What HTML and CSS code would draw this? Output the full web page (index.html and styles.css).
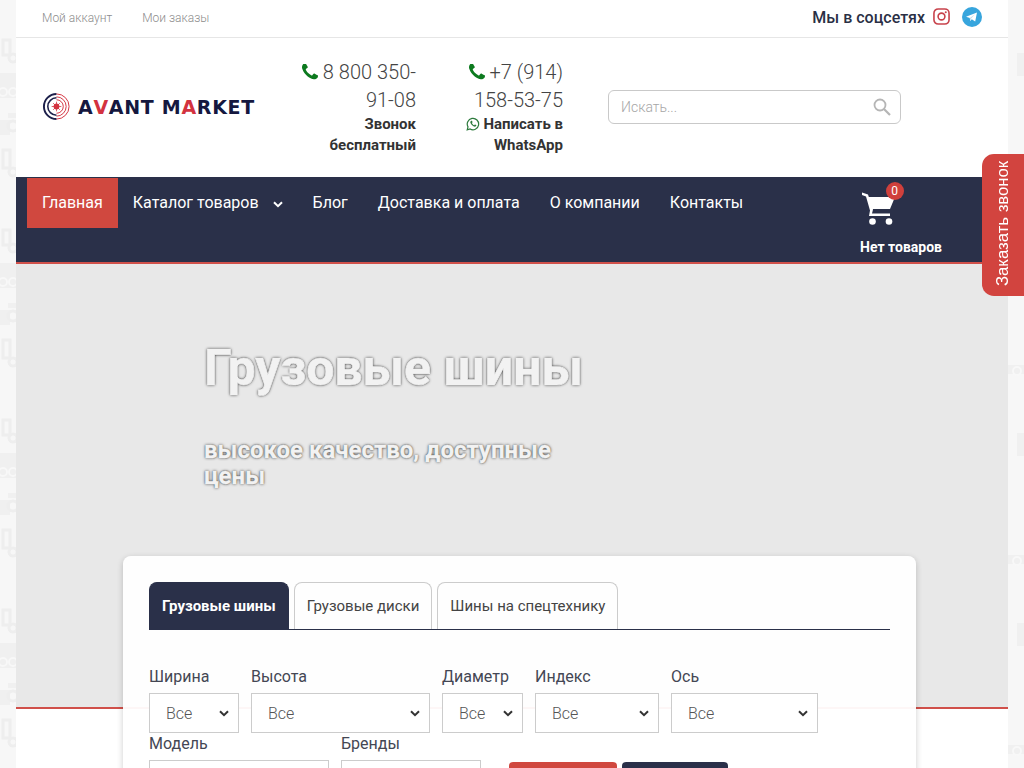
FILE: index.html
```html
<!DOCTYPE html>
<html lang="ru">
<head>
    <meta charset="UTF-8">
    <meta name="viewport" content="width=device-width, initial-scale=1.0">
    <title>Avant Market</title>
    <link rel="stylesheet" href="styles.css">
</head>
<body>
    <div class="wrapper">
        <div class="topbar">
            <div class="topbar-links">
                <a href="#">Мой аккаунт</a>
                <a href="#">Мои заказы</a>
            </div>
            <div class="social">
                <span class="social-title">Мы в соцсетях</span>
                <svg class="icon-insta" viewBox="0 0 18 18" width="17" height="17">
                    <rect x="1" y="1" width="16" height="16" rx="4.5" fill="none" stroke="#c8434c" stroke-width="1.7"/>
                    <circle cx="9" cy="9" r="3.6" fill="none" stroke="#c8434c" stroke-width="1.7"/>
                    <circle cx="13.5" cy="4.5" r="1.1" fill="#c8434c"/>
                </svg>
                <svg class="icon-telegram" viewBox="0 0 20 20" width="20" height="20">
                    <circle cx="10" cy="10" r="10" fill="#37a5dd"/>
                    <path d="M4 9.8 15 5.5 13.2 14.6 9.8 12.3 8.2 13.9 7.8 11z" fill="#fff"/>
                    <path d="M7.8 11 13 7.3 9.2 11.6 8.2 13.9z" fill="#c5dfee"/>
                </svg>
            </div>
        </div>

        <header class="header">
            <a class="logo" href="#">
                <svg viewBox="0 0 30 30" width="29" height="29">
                    <path d="M15 2a13 13 0 0 0 0 26" fill="none" stroke="#1c1f4a" stroke-width="2"/>
                    <path d="M15 6a9 9 0 0 0 0 18" fill="none" stroke="#1c1f4a" stroke-width="1.6"/>
                    <path d="M15 2a13 13 0 0 1 0 26M15 5a10 10 0 0 1 0 20M15 8a7 7 0 0 1 0 14" fill="none" stroke="#d3323f" stroke-width="1"/>
                    <circle cx="15" cy="15" r="3" fill="#d3323f"/>
                    <path d="M15 10v10M10 15h10M11.5 11.5l7 7M18.5 11.5l-7 7" stroke="#d3323f" stroke-width=".8"/>
                </svg>
                <span class="logo-text">A<b>V</b>ANT M<b>A</b>RKET</span>
            </a>
            <div class="phone phone-free">
                <div class="phone-number">
                    <svg class="icon-phone" viewBox="192 192 1408 1408" width="16" height="16"><path d="M1600 1240q0 27-10 70.5t-21 68.5q-21 50-122 106-94 51-186 51-27 0-53-3.5t-57.5-12.5-47-14.5-55.5-20.5-49-18q-98-35-175-83-127-79-264-216t-216-264q-48-77-83-175-3-9-18-49t-20.5-55.5-14.5-47-12.5-57.5-3.5-53q0-92 51-186 56-101 106-122 25-11 68.5-21t70.5-10q14 0 21 3 18 6 53 76 11 19 30 54t35 63.5 31 53.5q3 4 17.5 25t21.5 35.5 7 28.5q0 20-28.5 50t-62 55-62 53-28.5 46q0 9 5 22.5t8.5 20.5 14 24 11.5 19q76 137 174 235t235 174q2 1 19 11.5t24 14 20.5 8.5 22.5 5q18 0 46-28.5t53-62 55-62 50-28.5q14 0 28.5 7t35.5 21.5 25 17.5q25 15 53.5 31t63.5 35 54 30q70 35 76 53 3 7 3 21z" fill="#0d7a1f"/></svg>
                    8 800 350-91-08
                </div>
                <div class="phone-note">Звонок бесплатный</div>
            </div>
            <div class="phone phone-wa">
                <div class="phone-number">
                    <svg class="icon-phone" viewBox="192 192 1408 1408" width="16" height="16"><path d="M1600 1240q0 27-10 70.5t-21 68.5q-21 50-122 106-94 51-186 51-27 0-53-3.5t-57.5-12.5-47-14.5-55.5-20.5-49-18q-98-35-175-83-127-79-264-216t-216-264q-48-77-83-175-3-9-18-49t-20.5-55.5-14.5-47-12.5-57.5-3.5-53q0-92 51-186 56-101 106-122 25-11 68.5-21t70.5-10q14 0 21 3 18 6 53 76 11 19 30 54t35 63.5 31 53.5q3 4 17.5 25t21.5 35.5 7 28.5q0 20-28.5 50t-62 55-62 53-28.5 46q0 9 5 22.5t8.5 20.5 14 24 11.5 19q76 137 174 235t235 174q2 1 19 11.5t24 14 20.5 8.5 22.5 5q18 0 46-28.5t53-62 55-62 50-28.5q14 0 28.5 7t35.5 21.5 25 17.5q25 15 53.5 31t63.5 35 54 30q70 35 76 53 3 7 3 21z" fill="#0d7a1f"/></svg>
                    +7 (914) 158-53-75
                </div>
                <div class="phone-note">
                    <svg class="icon-wa" viewBox="0 0 14 14" width="14" height="14">
                        <path d="M1.2 12.8 2 9.9A5.7 5.7 0 1 1 4.1 12z" fill="none" stroke="#2c7a3c" stroke-width="1.2"/>
                        <path d="M4.9 3.9c-.6.5-.8 1.3-.4 2.2.6 1.500 1.900 2.800 3.400 3.400.9.300 1.700.1 2.200-.5.300-.4.300-.8.200-.9l-1.400-.7-.7.800c-1-.4-1.900-1.300-2.300-2.300l.7-.7-.6-1.400c-.1-.2-.7-.3-1.100.1z" fill="#2c7a3c"/>
                    </svg>
                    Написать в WhatsApp
                </div>
            </div>
            <form class="search">
                <input type="text" placeholder="Искать...">
                <svg viewBox="0 0 18 18" width="18" height="18">
                    <circle cx="7" cy="7" r="5.5" fill="none" stroke="#b5b5b5" stroke-width="1.8"/>
                    <path d="M11 11l6 6" stroke="#b5b5b5" stroke-width="2.2"/>
                </svg>
            </form>
        </header>

        <nav class="nav">
            <ul class="menu">
                <li class="active"><a href="#">Главная</a></li>
                <li>
                    <a href="#">Каталог товаров
                        <svg class="menu-arrow" viewBox="0 0 10 7" width="10" height="7"><path d="M1 1.2 5 5.2 9 1.2" fill="none" stroke="#fff" stroke-width="2"/></svg>
                    </a>
                </li>
                <li><a href="#">Блог</a></li>
                <li><a href="#">Доставка и оплата</a></li>
                <li><a href="#">О компании</a></li>
                <li><a href="#">Контакты</a></li>
            </ul>
            <a class="cart" href="#">
                <span class="cart-pic">
                    <svg viewBox="0 0 33 35" width="33" height="35">
                        <path d="M0 1.5 6 3.5 11 18.5 10 22.5H28V25H7L8 19.5 4 5.500 0 4z" fill="#fff"/>
                        <path d="M6 6H33L28 18H10z" fill="#fff"/>
                        <circle cx="10.5" cy="30.5" r="3.3" fill="#fff"/>
                        <circle cx="27" cy="30.5" r="3.3" fill="#fff"/>
                    </svg>
                    <span class="cart-count">0</span>
                </span>
                <span class="cart-label">Нет товаров</span>
            </a>
        </nav>

        <section class="hero">
            <h1>Грузовые шины</h1>
            <p>высокое качество, доступные цены</p>
        </section>

        <section class="picker">
            <div class="tabs">
                <a class="tab tab-active" href="#">Грузовые шины</a>
                <a class="tab" href="#">Грузовые диски</a>
                <a class="tab" href="#">Шины на спецтехнику</a>
            </div>
            <form class="filters">
                <div class="filter-row">
                    <label class="field w-width">Ширина<select><option>Все</option></select></label>
                    <label class="field w-height">Высота<select><option>Все</option></select></label>
                    <label class="field w-diam">Диаметр<select><option>Все</option></select></label>
                    <label class="field w-index">Индекс<select><option>Все</option></select></label>
                    <label class="field w-axle">Ось<select><option>Все</option></select></label>
                </div>
                <div class="filter-row">
                    <label class="field w-model">Модель<select><option>Все</option></select></label>
                    <label class="field w-brand">Бренды<select><option>Все</option></select></label>
                    <div class="filter-buttons">
                        <button class="btn btn-red" type="submit"></button>
                        <button class="btn btn-navy" type="reset"></button>
                    </div>
                </div>
            </form>
        </section>
    </div>

    <a class="callback" href="#">Заказать звонок</a>
</body>
</html>
```

FILE: styles.css
```css
html, body {
    height: 100%;
    overflow: hidden;
}

body {
    margin: 0;
    background-color: #f7f7f7;
    /* faint trucks tiled along the page edges */
    background-image: url("data:image/svg+xml,%3Csvg xmlns='http://www.w3.org/2000/svg' width='512' height='190'%3E%3Cg fill='%23f0f0f0'%3E%3Crect y='73' width='16' height='25'/%3E%3Crect y='120' width='10' height='15'/%3E%3Crect x='8' y='113' width='8' height='5'/%3E%3Crect x='505' y='53' width='7' height='23'/%3E%3Crect x='496' y='175' width='16' height='9'/%3E%3C/g%3E%3Cg fill='none' stroke='%23eeeeee' stroke-width='3'%3E%3Cpath d='M3 40h7v15H3zM3 150h7v18H3z'/%3E%3Ccircle cx='13' cy='58' r='4'/%3E%3Ccircle cx='13' cy='172' r='4'/%3E%3Ccircle cx='13' cy='126' r='5'/%3E%3C/g%3E%3Cg fill='none' stroke='%23f8f8f8' stroke-width='2'%3E%3Ccircle cx='3' cy='92' r='4'/%3E%3Ccircle cx='13' cy='92' r='4'/%3E%3Ccircle cx='505' cy='181' r='4'/%3E%3C/g%3E%3C/svg%3E");
    font-family: Roboto, "Liberation Sans", sans-serif;
    color: #2a2f45;
}

a {
    color: inherit;
    text-decoration: none;
}

.wrapper {
    width: 992px;
    margin: 0 auto;
    background: #fff;
    min-height: 100%;
}

/* top line */
.topbar {
    display: flex;
    justify-content: space-between;
    align-items: center;
    height: 35px;
    padding: 0 26px 2px;
    border-bottom: 1px solid #e6e6e6;
}

.topbar-links {
    display: flex;
    gap: 30px;
    font-size: 12px;
    font-weight: 300;
    color: #8c8c8c;
}

.social {
    display: flex;
    align-items: center;
    font-size: 16px;
    font-weight: 500;
}

.social svg {
    margin-bottom: 2px;
}

.icon-insta {
    margin-left: 8px;
}

.icon-telegram {
    margin-left: 12px;
}

/* header with logo and phones */
.header {
    display: flex;
    align-items: center;
    height: 137px;
    padding: 0 0 2px 26px;
}

.logo {
    display: flex;
    align-items: center;
    width: 213px;
}

.logo-text {
    margin-left: 7px;
    font-family: "DejaVu Sans", sans-serif;
    font-size: 19px;
    font-weight: 700;
    letter-spacing: .7px;
    color: #15183f;
    white-space: nowrap;
}

.logo-text b {
    color: #d3323f;
}

.phone {
    text-align: right;
}

.phone-free {
    width: 130px;
    margin-left: 31px;
}

.phone-wa {
    width: 110px;
    margin-left: 37px;
}

.phone-number {
    font-size: 20px;
    font-weight: 300;
    line-height: 28px;
    color: #444;
}

.icon-phone {
    vertical-align: -1px;
}

.phone-note {
    font-size: 15px;
    font-weight: 700;
    line-height: 21px;
    color: #333;
}

.icon-wa {
    vertical-align: -2px;
}

.search {
    display: flex;
    align-items: center;
    width: 293px;
    height: 34px;
    margin-left: 45px;
    box-sizing: border-box;
    border: 1px solid #c9c9c9;
    border-radius: 6px;
    padding: 0 9px 0 12px;
}

.search input {
    flex: 1;
    min-width: 0;
    border: none;
    outline: none;
    padding: 0;
    font-family: inherit;
    font-size: 14px;
    font-weight: 300;
}

.search input::placeholder {
    color: #a6a6a6;
}

/* main menu */
.nav {
    display: flex;
    justify-content: space-between;
    height: 84px;
    padding: 1px 66px 0 11px;
    background: #2a3049;
    border-bottom: 2px solid #d0504a;
}

.menu {
    display: flex;
    align-items: flex-start;
    margin: 0;
    padding: 0;
    list-style: none;
    color: #fff;
    font-size: 16px;
}

.menu a {
    display: block;
    padding: 0 15px;
    line-height: 50px;
}

.menu .active a {
    background: #d0483f;
}

.menu-arrow {
    margin-left: 10px;
    vertical-align: 0;
}

.cart {
    display: flex;
    flex-direction: column;
    align-items: center;
    padding-top: 13px;
    color: #fff;
}

.cart-pic {
    position: relative;
    display: block;
    height: 35px;
    margin-left: -46px;
}

.cart-count {
    position: absolute;
    top: -9px;
    right: -9px;
    width: 18px;
    height: 18px;
    border-radius: 50%;
    background: #d0403c;
    font-size: 12px;
    line-height: 18px;
    text-align: center;
}

.cart-label {
    margin-top: 13px;
    font-size: 14px;
    font-weight: 700;
}

/* banner */
.hero {
    height: 445px;
    box-sizing: border-box;
    padding: 74px 0 0 188px;
    background: #e8e8e8;
    border-bottom: 2px solid #d0504a;
    color: #f2f2f2;
}

.hero h1 {
    margin: 0;
    font-size: 50px;
    font-weight: 700;
    line-height: 60px;
    -webkit-text-stroke: .7px #f2f2f2;
    text-shadow: 0 0 3px #222, 0 0 1px #222;
}

.hero p {
    width: 380px;
    margin: 39px 0 0;
    font-size: 24px;
    font-weight: 700;
    line-height: 26px;
    -webkit-text-stroke: .4px #f2f2f2;
    text-shadow: 0 0 3px #333, 0 0 1px #333;
}

/* tyre picker */
.picker {
    position: relative;
    width: 793px;
    box-sizing: border-box;
    margin: -153px 0 0 107px;
    padding: 26px 26px 30px;
    background: rgba(255, 255, 255, .95);
    border-radius: 8px;
    box-shadow: 0 2px 6px rgba(0, 0, 0, .2);
}

.tabs {
    display: flex;
    gap: 5px;
    border-bottom: 1px solid #2a3049;
}

.tab {
    box-sizing: border-box;
    height: 47px;
    padding: 0 12px;
    border: 1px solid #ccc;
    border-bottom: none;
    border-radius: 8px 8px 0 0;
    font-size: 15px;
    line-height: 46px;
    color: #444;
}

.tab-active {
    background: #2a3049;
    border-color: #2a3049;
    color: #fff;
    font-weight: 700;
}

.filters {
    margin-top: 36px;
}

.filter-row {
    display: flex;
    gap: 12px;
}

.field {
    display: block;
    font-size: 16px;
    line-height: 22px;
    color: #444754;
}

.field select {
    display: block;
    width: 100%;
    height: 40px;
    margin-top: 5px;
    padding: 0 30px 0 16px;
    box-sizing: border-box;
    appearance: none;
    background: #fff url("data:image/svg+xml,%3Csvg xmlns='http://www.w3.org/2000/svg' width='10' height='7'%3E%3Cpath d='M1 1.2 5 5.2 9 1.2' fill='none' stroke='%23333' stroke-width='2'/%3E%3C/svg%3E") no-repeat right 9px center;
    border: 1px solid #ccc;
    border-radius: 0;
    font-family: inherit;
    font-size: 16px;
    font-weight: 300;
    color: #555;
}

.w-width { width: 90px; }
.w-height { width: 179px; }
.w-diam { width: 81px; }
.w-index { width: 124px; }
.w-axle { width: 147px; }
.w-model { width: 180px; }
.w-brand { width: 140px; }

.filter-buttons {
    display: flex;
    gap: 5px;
    margin: 29px 0 0 16px;
}

.btn {
    height: 40px;
    border: none;
    border-radius: 4px;
}

.btn-red {
    width: 108px;
    background: #d0483f;
}

.btn-navy {
    width: 106px;
    background: #2a3049;
}

/* side tab */
.callback {
    position: fixed;
    top: 154px;
    right: 0;
    display: flex;
    align-items: center;
    box-sizing: border-box;
    width: 42px;
    height: 142px;
    padding-top: 10px;
    background: #d2443f;
    border-radius: 0 12px 12px 0;
    color: #fff;
    font-family: "Liberation Sans", sans-serif;
    font-size: 16.7px;
    writing-mode: vertical-rl;
    transform: rotate(180deg);
}
```
